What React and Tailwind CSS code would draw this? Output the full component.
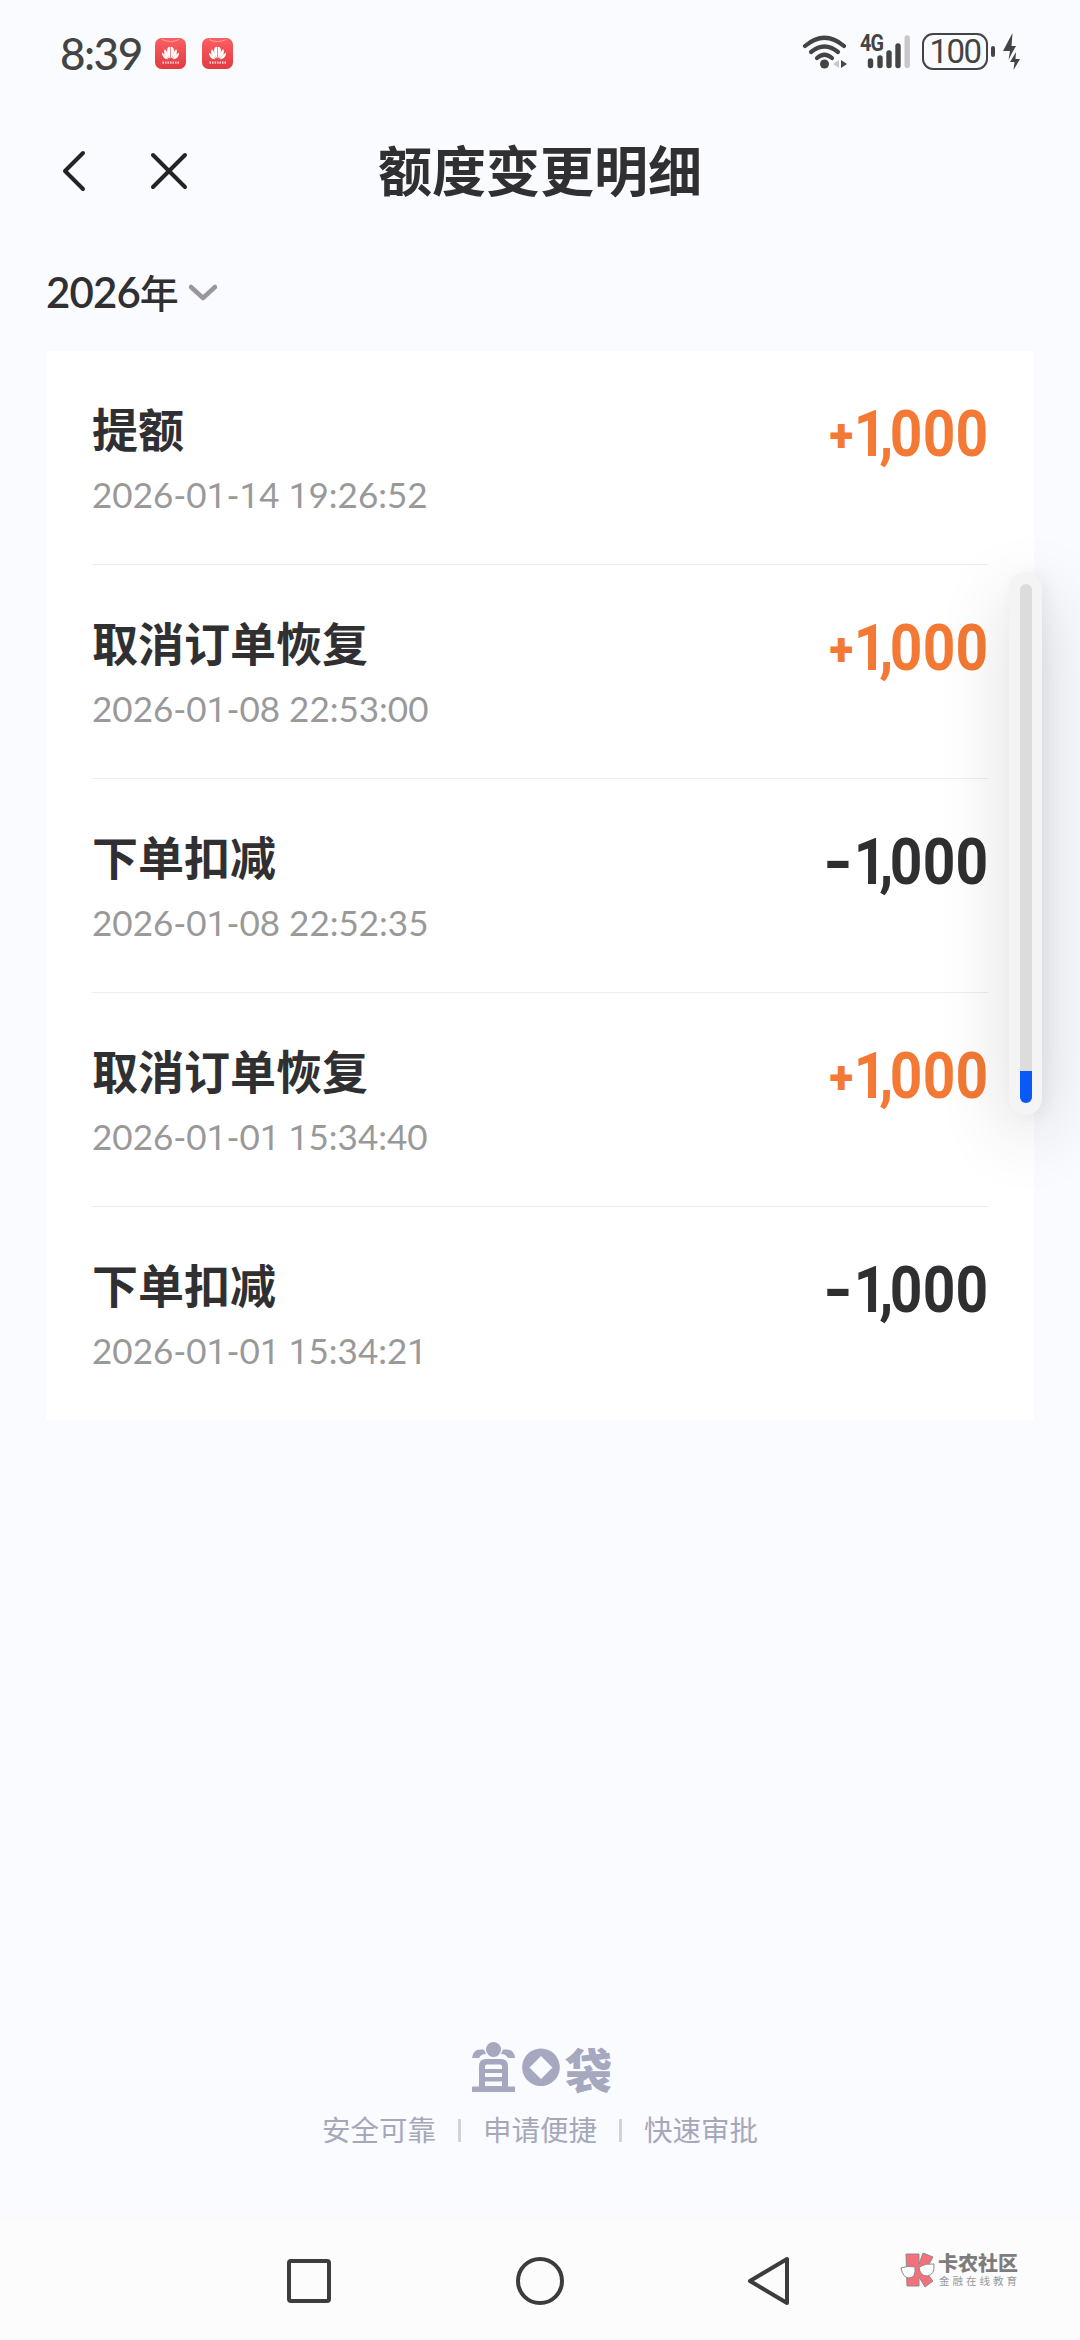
import React from "react";

const CJK = "font-['Noto_Sans_CJK_SC',sans-serif]";

function AppBadge() {
  return (
    <svg width="31" height="31" viewBox="0 0 31 31">
      <defs>
        <linearGradient id="badge" x1="0" y1="0" x2="0" y2="1">
          <stop offset="0" stopColor="#fb5f62" />
          <stop offset="1" stopColor="#e23a42" />
        </linearGradient>
      </defs>
      <rect width="31" height="31" rx="6.5" fill="url(#badge)" />
      <path d="M7 1.5Q15.500 5.500 24 1.500" fill="none" stroke="#fca5a5" strokeWidth="1" />
      <g fill="#fff">
        <path d="M15.200 20.500C12 17 11 11.500 13.300 9.200L15.200 8.800Z" />
        <path d="M15.800 20.500C19 17 20 11.500 17.700 9.200L15.800 8.800Z" />
        <path d="M14 20.500C10 18.500 8.200 14.500 9.600 11.200C11 11.500 13.500 16 14 20.500Z" />
        <path d="M17 20.500C21 18.500 22.800 14.500 21.400 11.200C20 11.500 17.500 16 17 20.500Z" />
        <path d="M13 21.200C9.500 21.500 7 18.500 6.900 14.800C9 15.500 12 18.500 13 21.200Z" />
        <path d="M18 21.200C21.500 21.500 24 18.500 24.100 14.800C22 15.500 19 18.500 18 21.200Z" />
      </g>
      <path d="M7.500 24.700H24" stroke="#fff" strokeWidth="2.200" strokeDasharray="1.500 1" opacity=".75" />
    </svg>
  );
}

function StatusIcons() {
  return (
    <div className="flex items-start text-[#444]">
      <svg width="46" height="38" viewBox="0 0 46 38" fill="none" stroke="currentColor" strokeWidth="4.200" strokeLinecap="round">
        <path d="M3 13Q22.500 -3.500 42 13" />
        <path d="M9 19Q22.500 8 36 19" />
        <path d="M15 25Q22.500 18.500 30 25" />
        <circle cx="22.500" cy="31" r="4.500" fill="currentColor" stroke="none" />
        <path d="M37 27V35L31 31Z" fill="#c8c8ca" stroke="none" />
        <path d="M39 27V35L45 31Z" fill="currentColor" stroke="none" />
      </svg>
      <div className="relative ml-[12px] h-[38px] w-[52px]">
        <svg width="52" height="38" viewBox="0 0 52 38" stroke="currentColor" strokeWidth="5.400" strokeLinecap="round">
          <path d="M10.500 28V32.500M20 25V32.500M29 20V32.500M38 13V32.500" />
          <path d="M47.200 5V32.500" stroke="#c8c8ca" />
        </svg>
        <span className="absolute left-0 top-0 text-[23px] leading-[22px] font-bold tracking-[-1px] font-['Roboto',sans-serif] origin-left scale-x-[0.86]">4G</span>
      </div>
      <div className="ml-[10px] flex h-[37px] w-[66px] items-center justify-center rounded-[11px] border-[2.500px] border-[#444] text-[33px] leading-none tracking-[-1.500px] font-['Roboto',sans-serif]">100</div>
      <div className="ml-[3px] mt-[13px] h-[11px] w-[4px] rounded-[2px] bg-[#444]" />
      <svg className="ml-[8px]" width="18" height="38" viewBox="0 0 18 38" fill="currentColor">
        <path d="M9.500 0L0 18H7L5.500 27L9 20L13 13H8.500Z" />
        <path d="M13 19L7 29H11.500L10.500 37L17 26H12.500Z" />
      </svg>
    </div>
  );
}

function Digits({ text }) {
  return text.split("").map((c, i) =>
    c === "1" ? (
      <span key={i} className="inline-block w-[0.568em] text-center font-['Roboto',sans-serif]">1</span>
    ) : (
      c
    )
  );
}

function Amount({ sign, accent }) {
  return (
    <div className={"flex h-[64px] items-center font-['Roboto',sans-serif] text-[64px] leading-[64px] font-bold " + (accent ? "text-[#f37934]" : "text-[#2f2f31]")}>
      {accent ? (
        <span className="text-[47px] leading-[64px] font-black"><span className="inline-block origin-right scale-x-[0.94]">{sign}</span></span>
      ) : (
        <span><span className="inline-block origin-right scale-x-[1.2]">{sign}</span></span>
      )}
      <span className="flex w-[135px] justify-end">
        <span className="shrink-0 origin-right translate-x-[1px] scale-x-[0.89]">
          <span className="tracking-[-8px]">1</span>
          <span className="tracking-[-4px]">,</span>
          <span className="tracking-[0.300px]">000</span>
        </span>
      </span>
    </div>
  );
}

const ROWS = [
  ["提额", "2026-01-14 19:26:52", true],
  ["取消订单恢复", "2026-01-08 22:53:00", true],
  ["下单扣减", "2026-01-08 22:52:35", false],
  ["取消订单恢复", "2026-01-01 15:34:40", true],
  ["下单扣减", "2026-01-01 15:34:21", false],
];

export default function App() {
  return (
    <div className={"relative flex h-[2340px] w-[1080px] flex-col overflow-hidden bg-[#fafbff] text-[#303032] " + CJK}>
      <div className="flex h-[104px] shrink-0 items-start justify-between pl-[60px] pr-[59px] pt-[33px]">
        <div className="flex items-center">
          <span className="w-[95px] text-[44px] leading-[40px] font-medium tracking-[-1.500px] text-[#444] font-['Lato',sans-serif]">8:39</span>
          <AppBadge />
          <span className="w-[16px]" />
          <AppBadge />
        </div>
        <StatusIcons />
      </div>

      <header className="grid h-[134px] shrink-0 grid-cols-[1fr_auto_1fr] items-center">
        <div className="flex items-center pl-[61px]">
          <svg width="26" height="42" viewBox="0 0 26 42" fill="none" stroke="#242426" strokeWidth="4" strokeLinecap="round" strokeLinejoin="round">
            <path d="M22 3L4 21L22 39" />
          </svg>
          <svg className="ml-[63px]" width="38" height="38" viewBox="0 0 38 38" stroke="#242426" strokeWidth="4" strokeLinecap="round">
            <path d="M3 3L35 35M35 3L3 35" />
          </svg>
        </div>
        <h1 className="pb-[5px] text-[54px] leading-[80px] font-bold">额度变更明细</h1>
      </header>

      <div className="flex h-[113px] shrink-0 items-center pl-[46px] pb-[6px]">
        <span className="text-[42px] leading-[60px] font-semibold tracking-[-0.900px] font-['Lato',sans-serif]">2026</span>
        <span className="mb-[2px] text-[39px] leading-[60px] font-medium">年</span>
        <svg className="ml-[8px] mt-[2px]" width="32" height="20" viewBox="0 0 32 20" fill="none" stroke="#98989a" strokeWidth="4.500" strokeLinecap="round" strokeLinejoin="round">
          <path d="M4 4L16 15L28 4" />
        </svg>
      </div>

      <main className="mx-[46px] h-[1069px] shrink-0 bg-white px-[46px]">
        {ROWS.map(([title, date, accent], i) => (
          <div key={i} className="flex h-[214px] items-start justify-between border-b border-[#ececee] pt-[46px] last:border-b-0">
            <div>
              <div className="text-[46px] leading-[60px] font-bold">{title}</div>
              <div className="mt-[7px] whitespace-pre text-[35px] leading-[60px] text-[#999] font-['Lato',sans-serif]"><Digits text={date} /></div>
            </div>
            <div className="mt-[6px]">
              <Amount sign={accent ? "+" : "-"} accent={accent} />
            </div>
          </div>
        ))}
      </main>

      <div className="grow" />

      <footer className="flex h-[178px] shrink-0 flex-col items-center text-[#a5a8bf]">
        <div className="ml-[4px] flex h-[52px] items-start">
          <svg width="88" height="52" viewBox="0 0 88 52" fill="currentColor">
            <circle cx="21.500" cy="8.500" r="7.500" />
            <path d="M0 17Q1 8 9 8.500H12L14 13Q9 13 7 17Z" />
            <path d="M43 17Q42 8 34 8.500H31L29 13Q34 13 36 17Z" />
            <path fillRule="evenodd" d="M7 46V25Q7 18 14 18H29Q36 18 36 25V45.500H42Q43 45.500 43 46.500V51H0V46.500Q0 45.500 1 45.500H7ZM15 23.500H28Q30 23.500 30 25.500V28H13V25.500Q13 23.500 15 23.500ZM13 32H30V36H13ZM13 40.500H30V45H13Z" />
            <path fillRule="evenodd" d="M69 7.500A18.800 18.800 0 1 1 68.900 7.500ZM69 15L57.500 26.500L69 38L80.500 26.500Z" />
          </svg>
          <span className="ml-[5px] text-[47px] leading-[53px] font-black">袋</span>
        </div>
        <div className="mt-[15px] flex items-center text-[28.500px] leading-[42px] text-[#a6a8b9]">
          <span>安全可靠</span>
          <i className="mx-[22px] mt-[3px] h-[23px] w-[3px] bg-[#d0d2dd]" />
          <span>申请便捷</span>
          <i className="mx-[22px] mt-[3px] h-[23px] w-[3px] bg-[#d0d2dd]" />
          <span>快速审批</span>
        </div>
      </footer>

      <nav className="flex h-[121px] shrink-0 items-start justify-center gap-[183px] bg-[#fcfcfc] pt-[36px]">
        <svg width="48" height="52" viewBox="0 0 48 52" fill="none" stroke="#3c3c3c" strokeWidth="4"><rect x="4" y="6" width="40" height="40" rx="2" /></svg>
        <svg width="48" height="52" viewBox="0 0 48 52" fill="none" stroke="#3c3c3c" strokeWidth="4"><circle cx="24" cy="26" r="22" /></svg>
        <svg width="48" height="52" viewBox="0 0 48 52" fill="none" stroke="#3c3c3c" strokeWidth="4" strokeLinejoin="round"><path d="M40 4V48L3 26Z" /></svg>
      </nav>

      <div className="absolute left-[1009px] top-[572px] flex h-[543px] w-[33px] flex-col items-center rounded-full bg-[#f4f4f4] py-[12px] shadow-[4px_20px_72px_0_rgba(0,0,0,0.2),5px_2px_16px_rgba(0,0,0,0.05)]">
        <div className="flex w-[12px] grow flex-col justify-end overflow-hidden rounded-full bg-[#dcdcdc]">
          <div className="h-[32px] bg-[#0a59f7]" />
        </div>
      </div>

      <div className="absolute left-[900px] top-[2252px] flex text-[#7d7d7d]">
        <svg width="36" height="37" viewBox="0 0 36 37" stroke="#8b8b8b" strokeWidth="1">
          <path d="M6 2H19V12L23 1L33 5L27 16L24 18L33 29L25 35L19 25V34H7Z" fill="#f4707c" />
          <path d="M1 16Q8 13 15 15Q16 26 9 26Q3 26 1 16ZM19 15Q26 11 34 12Q35 23 27 24Q20 24 19 15Z" fill="#fff" />
        </svg>
        <div className="ml-[2px]">
          <div className="text-[20px] leading-[22px] font-black">卡农社区</div>
          <div className="ml-[1px] text-[10.500px] leading-[14px] tracking-[3px] text-[#999]">金融在线教育</div>
        </div>
      </div>
    </div>
  );
}
